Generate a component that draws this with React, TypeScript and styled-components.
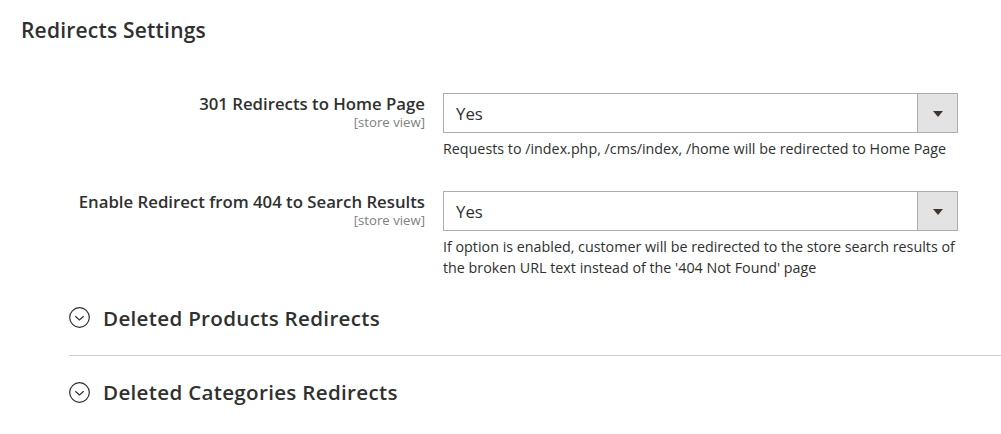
import React from "react";
import styled, { createGlobalStyle } from "styled-components";

const Global = createGlobalStyle`
  html, body { margin: 0; padding: 0; background: #fff; }
  body { font-family: "Open Sans", "Liberation Sans", sans-serif; color: #303030; }
  * { box-sizing: border-box; }
`;

const Page = styled.div`
  width: 1001px;
  height: 434px;
  overflow: hidden;
  padding: 16px 0 0 21px;
`;

const Title = styled.h2`
  margin: 0;
  font-size: 21px;
  line-height: 28px;
  font-weight: 600;
  color: #303030;
  letter-spacing: 0.2px;
`;

const Fields = styled.div`
  margin-top: 49px;
  display: flex;
  flex-direction: column;
  gap: 32px;
`;

const Row = styled.div`
  display: grid;
  grid-template-columns: 404px 515px;
  column-gap: 18px;
  align-items: start;
`;

const LabelCol = styled.div`
  text-align: right;
  padding-top: 1px;
`;

const Label = styled.div`
  font-size: 16.75px;
  line-height: 20px;
  font-weight: 600;
  color: #303030;
`;

const Scope = styled.div`
  font-size: 13.2px;
  line-height: 16px;
  color: #808080;
`;

const Select = styled.div`
  height: 40px;
  border: 1px solid #adadad;
  display: flex;
  align-items: stretch;
  background: #fff;
`;

const SelectValue = styled.div`
  flex: 1;
  padding-left: 12px;
  display: flex;
  align-items: center;
  font-size: 16.8px;
  color: #303030;
`;

const Arrow = styled.div`
  width: 40px;
  background: #e3e3e3;
  border-left: 1px solid #adadad;
  display: flex;
  align-items: center;
  justify-content: center;
  &::after {
    content: "";
    display: block;
    border-left: 5px solid transparent;
    border-right: 5px solid transparent;
    border-top: 6px solid #41362f;
    margin-top: 1px;
  }
`;

const Note = styled.div`
  margin-top: 5px;
  font-size: 14.3px;
  line-height: 21px;
  color: #303030;
`;

const Sections = styled.div`
  margin: 2px 0 0 48px;
`;

const Section = styled.div<{ $divider?: boolean }>`
  display: flex;
  align-items: center;
  gap: 13px;
  height: ${(p) => (p.$divider ? "76px" : "72px")};
  border-bottom: ${(p) => (p.$divider ? "1px solid #cccccc" : "none")};
`;

const SectionTitle = styled.div`
  font-size: 20.6px;
  font-weight: 600;
  color: #303030;
  letter-spacing: 0.3px;
`;

const ToggleIcon = () => (
  <svg width="21" height="21" viewBox="0 0 21 21">
    <circle cx="10.5" cy="10.5" r="9.8" fill="none" stroke="#303030" strokeWidth="1.2" />
    <path d="M6.3 9.2 L10.5 12.9 L14.7 9.2" fill="none" stroke="#303030" strokeWidth="1.2" />
  </svg>
);

const fields = [
  {
    label: "301 Redirects to Home Page",
    note: "Requests to /index.php, /cms/index, /home will be redirected to Home Page",
  },
  {
    label: "Enable Redirect from 404 to Search Results",
    note: "If option is enabled, customer will be redirected to the store search results of the broken URL text instead of the '404 Not Found' page",
  },
];

export default function App() {
  return (
    <>
      <Global />
      <Page>
        <Title>Redirects Settings</Title>
        <Fields>
          {fields.map((f) => (
            <Row key={f.label}>
              <LabelCol>
                <Label>{f.label}</Label>
                <Scope>[store view]</Scope>
              </LabelCol>
              <div>
                <Select>
                  <SelectValue>Yes</SelectValue>
                  <Arrow />
                </Select>
                <Note>{f.note}</Note>
              </div>
            </Row>
          ))}
        </Fields>
        <Sections>
          <Section $divider>
            <ToggleIcon />
            <SectionTitle>Deleted Products Redirects</SectionTitle>
          </Section>
          <Section>
            <ToggleIcon />
            <SectionTitle>Deleted Categories Redirects</SectionTitle>
          </Section>
        </Sections>
      </Page>
    </>
  );
}
